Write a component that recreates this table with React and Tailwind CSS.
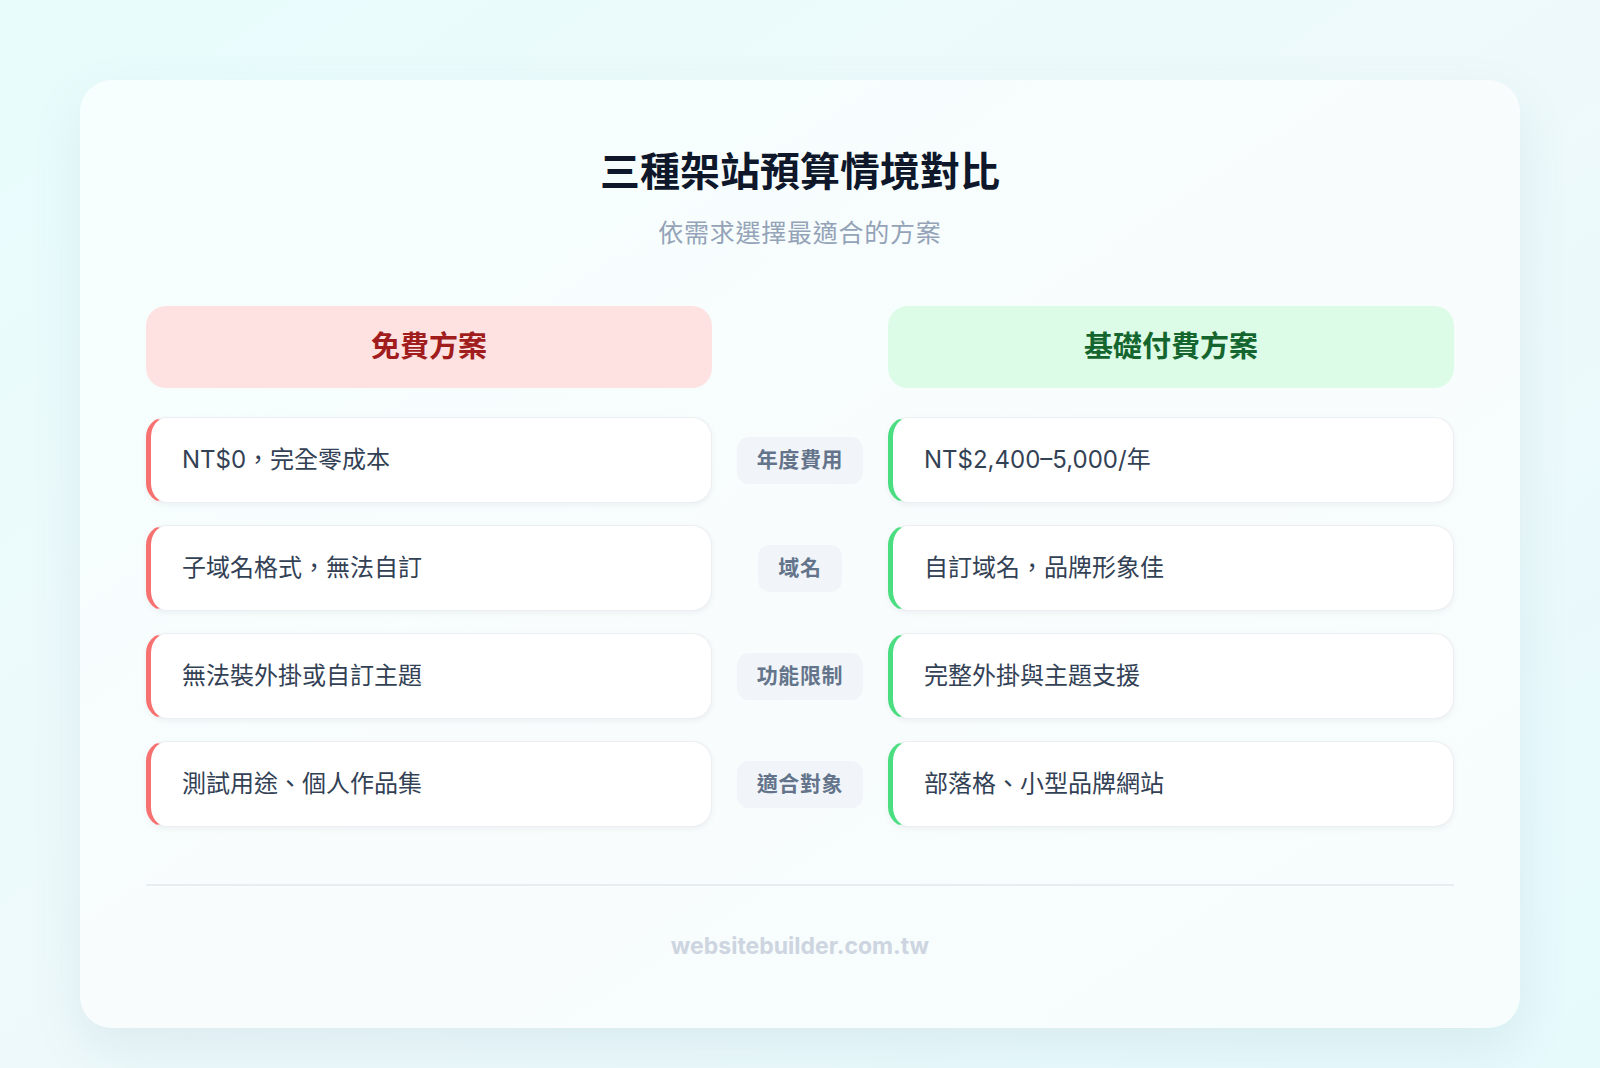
import React from "react";

// 對比資料
const rows = [
    { label: "年度費用", free: "NT$0，完全零成本", paid: "NT$2,400–5,000/年" },
    { label: "域名", free: "子域名格式，無法自訂", paid: "自訂域名，品牌形象佳" },
    { label: "功能限制", free: "無法裝外掛或自訂主題", paid: "完整外掛與主題支援" },
    { label: "適合對象", free: "測試用途、個人作品集", paid: "部落格、小型品牌網站" },
];

const font = "font-['Inter','Noto_Sans_CJK_TC',sans-serif]";

function Cell({ text, tone }) {
    const border = tone === "free" ? "border-l-[#f87171]" : "border-l-[#4ade80]";
    return (
        <div
            className={`h-[86px] flex items-center rounded-[20px] bg-white border border-[#eceef1] border-l-[5px] ${border} shadow-[0_2px_6px_rgba(15,23,42,0.05)] pl-[31px] text-[24px] text-[#334155]`}
        >
            {text}
        </div>
    );
}

export default function App() {
    return (
        <div
            className={`${font} w-full min-h-[1068px] bg-gradient-to-br from-[#e8fcfc] via-[#eef9fb] to-[#e6fafc] px-[80px] pt-[80px] pb-[40px]`}
        >
            <div className="w-[1440px] h-[948px] rounded-[32px] bg-gradient-to-br from-[#f6fffe] via-[#f8fcfd] to-[#f7fdfd] shadow-[0_20px_50px_rgba(100,140,160,0.12)] px-[66px] pt-[64px] flex flex-col">
                {/* 標題 */}
                <h1 className="text-center text-[40px] leading-[56px] font-bold text-[#0f172a]">
                    三種架站預算情境對比
                </h1>
                <p className="mt-[15px] text-center text-[25px] leading-[36px] tracking-[0.03em] text-[#94a3b8]">
                    依需求選擇最適合的方案
                </p>

                {/* 欄位標頭 */}
                <div className="mt-[55px] grid grid-cols-[1fr_176px_1fr]">
                    <div className="h-[82px] rounded-[20px] bg-[#fee2e2] flex items-center justify-center text-[29px] font-bold text-[#a11d1d]">
                        免費方案
                    </div>
                    <div />
                    <div className="h-[82px] rounded-[20px] bg-[#dcfce7] flex items-center justify-center text-[29px] font-bold text-[#15652f]">
                        基礎付費方案
                    </div>
                </div>

                {/* 對比列 */}
                <div className="mt-[29px] grid grid-cols-[1fr_176px_1fr] gap-y-[22px]">
                    {rows.map((r) => (
                        <React.Fragment key={r.label}>
                            <Cell text={r.free} tone="free" />
                            <div className="flex items-center justify-center">
                                <span className="rounded-[12px] bg-[#f1f5f9] px-[20px] h-[47px] flex items-center text-[21px] tracking-[0.03em] font-bold text-[#64748b]">
                                    {r.label}
                                </span>
                            </div>
                            <Cell text={r.paid} tone="paid" />
                        </React.Fragment>
                    ))}
                </div>

                <div className="mt-[57px] h-[2px] bg-[#e8edf0]" />

                <div className="mt-[45px] text-center text-[23px] leading-[30px] font-bold text-[#cdd5e0]">
                    websitebuilder.com.tw
                </div>
            </div>
        </div>
    );
}
